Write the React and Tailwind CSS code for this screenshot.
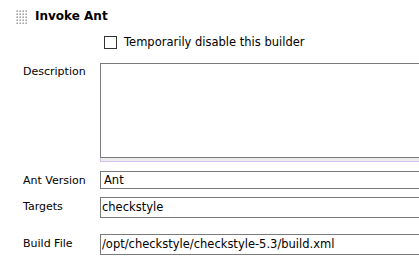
import React from "react";

function Grip() {
  const dots = [];
  for (let r = 0; r < 5; r++) {
    for (let c = 0; c < 4; c++) {
      const x = c * 3;
      const y = r * 3;
      dots.push(
        <g key={r + "-" + c}>
          <rect x={x} y={y} width="2" height="2" fill="#c4c4c4" />
          <rect x={x} y={y} width="1" height="1" fill="#e2e2e2" />
          <rect x={x + 1} y={y + 1} width="1" height="1" fill="#a8a8a8" />
        </g>
      );
    }
  }
  return (
    <svg width="11" height="14" viewBox="0 0 11 14" className="block shrink-0">
      {dots}
    </svg>
  );
}

export default function App() {
  return (
    <div
      className="w-[419px] h-[262px] overflow-hidden bg-white text-black text-[11px] leading-[13px]"
      style={{ fontFamily: '"DejaVu Sans", Verdana, sans-serif' }}
    >
      {/* header */}
      <div className="h-[32px] pt-[10px] pl-[16px] flex items-start">
        <Grip />
        <div className="ml-[8px] -mt-[1px] font-bold text-[12px] leading-[15px] whitespace-nowrap">Invoke Ant</div>
      </div>

      {/* checkbox */}
      <div className="h-[31px] pt-[4px] pl-[104px] flex items-start">
        <div className="w-[13px] h-[13px] shrink-0 border border-[#333] bg-white"></div>
        <div className="ml-[7px] leading-[13px] text-[11.5px] whitespace-nowrap">Temporarily disable this builder</div>
      </div>

      {/* description */}
      <div className="flex items-start">
        <div className="w-[100px] shrink-0 pl-[23px] pt-[2px]">Description</div>
        <div className="flex flex-col shrink-0">
          <div className="w-[330px] h-[95px] border border-[#7a7a7a] bg-white"></div>
          <div className="w-[330px] h-[4px] bg-[#ececec] border-l border-b border-[#d4c2ee]"></div>
        </div>
      </div>

      {/* ant version */}
      <div className="mt-[9px] flex items-start">
        <div className="w-[100px] shrink-0 pl-[23px] pt-[3px]">Ant Version</div>
        <div className="w-[330px] shrink-0 h-[18px] border border-[#7a7a7a] pl-[3px] flex items-center text-[11.5px]">
          Ant
        </div>
      </div>

      {/* targets */}
      <div className="mt-[8px] flex items-start">
        <div className="w-[100px] shrink-0 pl-[23px] pt-[3px]">Targets</div>
        <div className="w-[330px] shrink-0 h-[21px] border border-[#7a7a7a] pl-[1px] flex items-center text-[11.5px]">
          checkstyle
        </div>
      </div>

      {/* build file */}
      <div className="mt-[16px] flex items-start">
        <div className="w-[100px] shrink-0 pl-[23px] pt-[3px]">Build File</div>
        <div className="w-[330px] shrink-0 h-[21px] border border-[#7a7a7a] pl-[1px] flex items-center text-[11.5px] whitespace-nowrap">
          /opt/checkstyle/checkstyle-5.3/build.xml
        </div>
      </div>
    </div>
  );
}
